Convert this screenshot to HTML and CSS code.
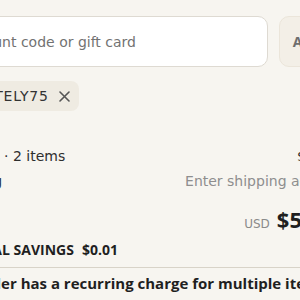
FILE: index.html
```html
<!DOCTYPE html>
<html lang="en">
<head>
<meta charset="utf-8">
<title>Order summary</title>
<link rel="stylesheet" href="styles.css">
</head>
<body>
<div class="summary">
  <div class="discount">
    <input class="code-input" type="text" placeholder="Discount code or gift card">
    <button class="apply" type="button">Apply</button>
  </div>
  <div class="tags">
    <span class="tag">
      <svg class="tag-icon" width="16" height="16" viewBox="0 0 16 16" aria-hidden="true"><path d="M2 2h6l6 6-6 6-6-6z" fill="none" stroke="#555" stroke-width="1.4" stroke-linejoin="round"/><circle cx="5.5" cy="5.5" r="1" fill="#555"/></svg>
      <span class="tag-text">LATELY75</span>
      <svg class="tag-x" width="11" height="11" viewBox="0 0 11 11" aria-hidden="true"><path d="M1 1l9 9M10 1l-9 9" stroke="#555" stroke-width="1.6" stroke-linecap="round"/></svg>
    </span>
  </div>
  <div class="rows">
    <div class="row">
      <span class="label">Subtotal · 2 items</span>
      <span class="value">$55.98</span>
    </div>
    <div class="row">
      <span class="label">Shipping</span>
      <span class="value muted">Enter shipping address</span>
    </div>
    <div class="row total">
      <span class="total-label">Total</span>
      <span class="total-value"><span class="currency">USD</span><span class="amount">$55.98</span></span>
    </div>
    <div class="savings">
      <svg class="sav-icon" width="16" height="16" viewBox="0 0 16 16" aria-hidden="true"><path d="M2 2h6l6 6-6 6-6-6z" fill="none" stroke="#222" stroke-width="1.6" stroke-linejoin="round"/><circle cx="5.5" cy="5.5" r="1" fill="#222"/></svg>
      <span>TOTAL SAVINGS</span>
      <span>$0.01</span>
    </div>
  </div>
  <div class="divider"></div>
  <p class="recurring">This order has a recurring charge for multiple items</p>
</div>
</body>
</html>
```
FILE: styles.css
```css
html, body {
  margin: 0;
  padding: 0;
  background: #f7f5f0;
  overflow: hidden;
}
body {
  font-family: "DejaVu Sans", sans-serif;
  font-size: 14px;
  color: #2e2e2e;
}
.summary {
  margin-left: -59px;
  width: 405px;
  padding-top: 16px;
}
.discount {
  display: flex;
  gap: 11px;
}
.code-input {
  flex: 1;
  min-width: 0;
  height: 51px;
  box-sizing: border-box;
  border: 1px solid #dedad2;
  border-radius: 10px;
  background: #fff;
  padding: 0 13px;
  font-family: "DejaVu Sans", sans-serif;
  font-size: 14px;
  color: #333;
  outline: none;
}
.code-input::placeholder {
  color: #727272;
}
.apply {
  width: 67px;
  height: 51px;
  box-sizing: border-box;
  border: 1px solid #ebe5da;
  border-radius: 10px;
  background: #f3efe7;
  font-family: "Open Sans", sans-serif;
  font-weight: 700;
  font-size: 14px;
  color: #6e6e6e;
  padding: 0;
}
.tags {
  margin-top: 14px;
  display: flex;
}
.tag {
  display: inline-flex;
  align-items: center;
  height: 30px;
  padding: 0 9px 0 10px;
  border-radius: 8px;
  background: #efebe2;
  color: #333;
}
.tag-icon {
  margin-right: 9px;
}
.tag-text {
  letter-spacing: 0.8px;
}
.tag-x {
  margin-left: 10px;
}
.rows {
  margin-top: 35px;
  display: flex;
  flex-direction: column;
}
.row {
  display: flex;
  justify-content: space-between;
  align-items: baseline;
  line-height: 20px;
  margin-bottom: 5px;
}
.muted {
  color: #8e8e8e;
}
.total {
  margin-top: 9px;
  margin-bottom: 2px;
  line-height: 28px;
}
.total-label {
  font-family: "Open Sans", sans-serif;
  font-weight: 700;
  font-size: 17px;
}
.total-value {
  display: flex;
  align-items: baseline;
  gap: 7px;
}
.currency {
  font-size: 12px;
  color: #8a8a8a;
}
.amount {
  font-family: "Open Sans", sans-serif;
  font-weight: 700;
  font-size: 22px;
  color: #1f1f1f;
}
.savings {
  display: flex;
  align-items: center;
  gap: 8px;
  font-family: "Open Sans", sans-serif;
  font-weight: 700;
  font-size: 14px;
  line-height: 20px;
  color: #1f1f1f;
}
.divider {
  margin-top: 7px;
  height: 1px;
  background: #d8d3c8;
}
.recurring {
  margin: 5px 0 0;
  font-family: "Open Sans", sans-serif;
  font-weight: 700;
  font-size: 15px;
  line-height: 20px;
  color: #1f1f1f;
  white-space: nowrap;
}
```
